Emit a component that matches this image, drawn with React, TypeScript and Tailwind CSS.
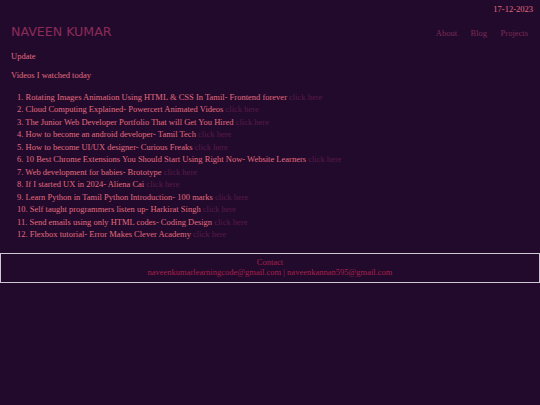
import React from "react";

const items = [
  "Rotating Images Animation Using HTML & CSS In Tamil- Frontend forever",
  "Cloud Computing Explained- Powercert Animated Videos",
  "The Junior Web Developer Portfolio That will Get You Hired",
  "How to become an android developer- Tamil Tech",
  "How to become UI/UX designer- Curious Freaks",
  "10 Best Chrome Extensions You Should Start Using Right Now- Website Learners",
  "Web development for babies- Brototype",
  "If I started UX in 2024- Aliena Cai",
  "Learn Python in Tamil Python Introduction- 100 marks",
  "Self taught programmers listen up- Harkirat Singh",
  "Send emails using only HTML codes- Coding Design",
  "Flexbox tutorial- Error Makes Clever Academy",
];

export default function App() {
  return (
    <div
      className="min-h-[405px] w-full bg-[#220a2d] text-[8.5px] leading-[10px] text-[#e36a7e]"
      style={{ fontFamily: '"Liberation Serif", "Times New Roman", serif' }}
    >
      <div className="flex justify-end pr-[7px] pt-[4px]">
        <span>17-12-2023</span>
      </div>
      <div className="mt-[10px] flex items-center justify-between pl-[11px] pr-[12px]">
        <h1
          className="text-[12.6px] leading-[15px] text-[#8c2a58]"
          style={{ fontFamily: '"DejaVu Sans", Verdana, sans-serif' }}
        >
          NAVEEN KUMAR
        </h1>
        <nav className="mt-[2px] flex gap-[13.5px] text-[#7c2a55]">
          <span>About</span>
          <span>Blog</span>
          <span>Projects</span>
        </nav>
      </div>
      <p className="mt-[11.5px] pl-[11px]">Update</p>
      <p className="mt-[9px] pl-[11px]">Videos I watched today</p>
      <ol className="mt-[11px] pl-[17px] leading-[12.5px]">
        {items.map((t, i) => (
          <li key={i}>
            {i + 1}. {t} <span className="text-[#5a1a48]">click here</span>
          </li>
        ))}
      </ol>
      <footer className="mt-[12px] border-[1.5px] border-[#cfc6d6] pt-[4.5px] pb-[5px] text-center leading-[9.7px] text-[#a8204a]">
        <div>Contact</div>
        <div>naveenkumarlearningcode@gmail.com | naveenkannan595@gmail.com</div>
      </footer>
    </div>
  );
}
